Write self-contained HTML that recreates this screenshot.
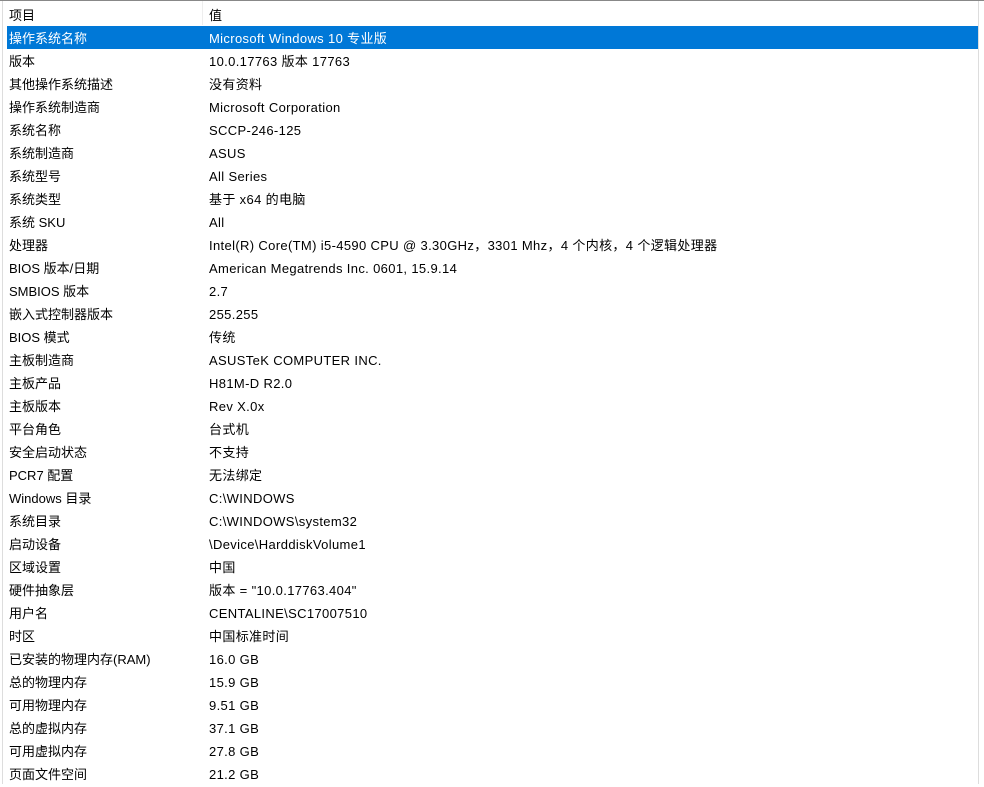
<!DOCTYPE html>
<html><head><meta charset="utf-8"><style>
body{margin:0;width:984px;height:784px;background:#fff;overflow:hidden;position:relative;font-family:"Microsoft YaHei","Liberation Sans","Noto Sans CJK SC",sans-serif;font-size:13px;color:#000}
.top{position:absolute;left:0;top:0;width:984px;height:1px;background:#888}
.lb{position:absolute;left:2px;top:1px;width:1px;height:783px;background:#ddd}
.rb{position:absolute;left:978px;top:1px;width:1px;height:783px;background:#ddd}
.hs{position:absolute;left:202px;top:1px;width:1px;height:24px;background:#eee}
.r{position:absolute;left:7px;width:971px;height:23px;line-height:25px;white-space:nowrap}
.r span{position:absolute}
.a{left:2px}.b{left:202px;letter-spacing:0.35px}
.sel{background:#0078d7;color:#fff}
</style></head><body>
<div class="top"></div><div class="lb"></div><div class="rb"></div><div class="hs"></div>
<div class="r" style="top:3px"><span class="a">项目</span><span class="b">值</span></div>
<div id="rows"></div>
<script>
var d=[["操作系统名称","Microsoft Windows 10 专业版"],["版本","10.0.17763 版本 17763"],["其他操作系统描述","没有资料"],["操作系统制造商","Microsoft Corporation"],["系统名称","SCCP-246-125"],["系统制造商","ASUS"],["系统型号","All Series"],["系统类型","基于 x64 的电脑"],["系统 SKU","All"],["处理器","Intel(R) Core(TM) i5-4590 CPU @ 3.30GHz，3301 Mhz，4 个内核，4 个逻辑处理器"],["BIOS 版本/日期","American Megatrends Inc. 0601, 15.9.14"],["SMBIOS 版本","2.7"],["嵌入式控制器版本","255.255"],["BIOS 模式","传统"],["主板制造商","ASUSTeK COMPUTER INC."],["主板产品","H81M-D R2.0"],["主板版本","Rev X.0x"],["平台角色","台式机"],["安全启动状态","不支持"],["PCR7 配置","无法绑定"],["Windows 目录","C:\\WINDOWS"],["系统目录","C:\\WINDOWS\\system32"],["启动设备","\\Device\\HarddiskVolume1"],["区域设置","中国"],["硬件抽象层","版本 = \"10.0.17763.404\""],["用户名","CENTALINE\\SC17007510"],["时区","中国标准时间"],["已安装的物理内存(RAM)","16.0 GB"],["总的物理内存","15.9 GB"],["可用物理内存","9.51 GB"],["总的虚拟内存","37.1 GB"],["可用虚拟内存","27.8 GB"],["页面文件空间","21.2 GB"]];
var h="";d.forEach(function(x,i){var e=function(s){return s.replace(/&/g,"&amp;").replace(/</g,"&lt;")};h+='<div class="r'+(i==0?' sel':'')+'" style="top:'+(26+23*i)+'px"><span class="a">'+e(x[0])+'</span><span class="b">'+e(x[1])+'</span></div>'});
document.getElementById("rows").innerHTML=h;
</script>
</body></html>
